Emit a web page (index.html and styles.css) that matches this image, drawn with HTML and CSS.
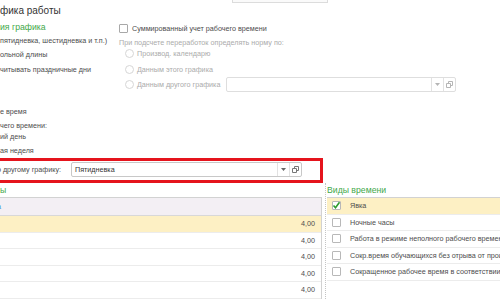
FILE: index.html
```html
<!DOCTYPE html>
<html lang="ru">
<head>
  <meta charset="UTF-8" />
  <meta name="viewport" content="width=device-width, initial-scale=1.0" />
  <title>График работы</title>
  <link rel="stylesheet" href="styles.css">
</head>
<body>
  <div class="top">
    <h1 class="title">фика работы</h1>
    <div class="top-field"></div>
  </div>

  <div class="settings">
    <div class="col-left">
      <div class="group-title">ия графика</div>
      <div class="line l2">пятидневка, шестидневка и т.п.)</div>
      <div class="line l3">ольной длины</div>
      <div class="line l4">читывать праздничные дни</div>
    </div>
    <div class="col-right">
      <div class="check-row"><span class="check"></span>Суммированный учет рабочего времени</div>
      <div class="hint">При подсчете переработок определять норму по:</div>
      <div class="radio-row r1"><span class="radio"></span>Производ. календарю</div>
      <div class="radio-row r2"><span class="radio"></span>Данным этого графика</div>
      <div class="radio-row r3">
        <span class="radio"></span>Данным другого графика
        <div class="field field-off">
          <span class="field-text"></span>
          <span class="field-btn"><svg width="5" height="3" viewBox="0 0 5 3"><path d="M0 0h5L2.5 3z" fill="#b5b5b5"/></svg></span>
          <span class="field-btn"><svg width="7" height="7" viewBox="0 0 7 7"><path d="M0.5 2.5h4v4h-4z M2.5 2.5v-2h4v4h-2" fill="none" stroke="#b5b5b5"/></svg></span>
        </div>
      </div>
    </div>
  </div>

  <div class="hours">
    <div class="line h1">е время</div>
    <div class="line h2">чего времени:</div>
    <div class="line h3">ий день</div>
    <div class="line h4">ая неделя</div>
  </div>

  <div class="other-row">
    <span class="other-label">по другому графику:</span>
    <div class="field field-main">
      <span class="field-text">Пятидневка</span>
      <span class="field-btn"><svg width="5" height="3" viewBox="0 0 5 3"><path d="M0 0h5L2.5 3z" fill="#666"/></svg></span>
      <span class="field-btn"><svg width="7" height="7" viewBox="0 0 7 7"><path d="M0.5 2.5h4v4h-4z M2.5 2.5v-2h4v4h-2" fill="none" stroke="#777"/></svg></span>
    </div>
    <div class="red-frame"></div>
  </div>

  <div class="tables">
    <div class="left-panel">
      <div class="panel-title">ы</div>
      <div class="grid">
        <div class="grid-head"><span class="head-cut">а</span></div>
        <div class="grid-row current">4,00</div>
        <div class="grid-row">4,00</div>
        <div class="grid-row">4,00</div>
        <div class="grid-row">4,00</div>
        <div class="grid-row">4,00</div>
      </div>
    </div>
    <div class="divider"></div>
    <div class="right-panel">
      <div class="panel-title">Виды времени</div>
      <div class="kinds">
        <div class="kind current">
          <span class="box box-on"><svg width="9" height="9" viewBox="0 0 9 9"><path d="M1.5 4.5l2 2.2 4-5.5" fill="none" stroke="#2c9c2c" stroke-width="1.6"/></svg></span>Явка
        </div>
        <div class="kind"><span class="box"></span>Ночные часы</div>
        <div class="kind"><span class="box"></span>Работа в режиме неполного рабочего времени</div>
        <div class="kind"><span class="box"></span>Сокр.время обучающихся без отрыва от производства</div>
        <div class="kind"><span class="box"></span>Сокращенное рабочее время в соответствии с законодательством</div>
      </div>
    </div>
  </div>
</body>
</html>
```

FILE: styles.css
```css
* {
  margin: 0;
  padding: 0;
  box-sizing: border-box;
}
body {
  width: 500px;
  height: 300px;
  overflow: hidden;
  background-color: white;
  font-family: "Liberation Sans", Arial, sans-serif;
  font-size: 7.2px;
  color: #4d4d4d;
  white-space: nowrap;
}
/* title */
.top {
  display: flex;
  height: 20px;
}
.title {
  width: 232px;
  font-size: 10px;
  font-weight: normal;
  color: #333;
  line-height: 22px;
}
.top-field {
  width: 96px;
  height: 3px;
  border: 1px solid #dcdcdc;
  border-top: none;
  background-color: #fafafa;
}
/* settings */
.settings {
  display: flex;
}
.col-left {
  width: 119px;
}
.group-title,
.panel-title {
  color: #43a84a;
  font-size: 8.7px;
  height: 15px;
  line-height: 15px;
}
.line {
  height: 14px;
  line-height: 14px;
}
.l2 {
  height: 12px;
  line-height: 12px;
}
.l3,
.l4 {
  margin-top: 1px;
}
.col-right {
  display: flex;
  flex-direction: column;
}
.check-row {
  display: flex;
  align-items: center;
  height: 16px;
}
.check {
  width: 9px;
  height: 9px;
  border: 1px solid #a8a8a8;
  border-radius: 1px;
  margin-right: 4px;
  background-color: white;
}
.hint {
  margin-top: 2px;
  height: 10px;
  line-height: 10px;
  color: #ababab;
}
.radio-row {
  display: flex;
  align-items: center;
  height: 10px;
  padding-left: 6px;
  color: #ababab;
}
.r2 {
  margin-top: 6px;
}
.r3 {
  margin-top: 3px;
  height: 15px;
}
.radio {
  width: 9px;
  height: 9px;
  border: 1px solid #d6d6d6;
  border-radius: 50%;
  margin-right: 3px;
}
/* input field */
.field {
  display: flex;
  height: 15px;
  border: 1px solid #c8c8c8;
  border-radius: 2px;
  background-color: white;
}
.field-off {
  width: 230px;
  margin-left: 6px;
  border-color: #dedede;
}
.field-text {
  flex: 1;
  padding-left: 3px;
  line-height: 13px;
  color: #333;
}
.field-btn {
  width: 12px;
  display: flex;
  align-items: center;
  justify-content: center;
  border-left: 1px solid #e2e2e2;
}
/* hours */
.hours {
  padding-top: 14px;
}
.hours .line {
  height: 12px;
  line-height: 12px;
}
.h2 {
  margin-top: 2px;
}
.hours .h3 {
  height: 10px;
  line-height: 10px;
}
.h4 {
  margin-top: 3px;
}
/* other schedule row */
.other-row {
  position: relative;
  display: flex;
  align-items: center;
  margin-top: 5px;
  height: 15px;
}
.other-label {
  width: 71px;
  margin-left: -7px;
  flex-shrink: 0;
}
.field-main {
  width: 231px;
  margin-left: 7px;
}
.red-frame {
  position: absolute;
  top: -4px;
  left: -10px;
  width: 333px;
  height: 25px;
  border: 3px solid #e5141d;
}
/* tables */
.tables {
  display: flex;
  margin-top: 6px;
}
.left-panel {
  width: 322px;
  flex-shrink: 0;
}
.panel-title {
  height: 14px;
  line-height: 14px;
}
.grid {
  border-top: 1px solid #d2d2d2;
  border-right: 1px solid #d2d2d2;
}
.grid-head {
  height: 18px;
  line-height: 17px;
  background-color: #f3eff4;
  border-bottom: 1px solid #d8d8d8;
}
.head-cut {
  margin-left: -3px;
  color: #3b8fd9;
}
.grid-row {
  height: 16.5px;
  line-height: 16px;
  text-align: right;
  padding-right: 6px;
  border-bottom: 1px solid #ececec;
}
.current {
  background-color: #fdf0c4;
}
.divider {
  width: 1px;
  margin: 0 1px 0 3px;
  border-left: 1px dotted #c4c4c4;
  flex-shrink: 0;
}
.right-panel {
  width: 260px;
  flex-shrink: 0;
}
.kinds {
  border-top: 1px solid #d2d2d2;
}
.kind {
  display: flex;
  align-items: center;
  height: 16.5px;
  padding-left: 5px;
  border-bottom: 1px solid #ececec;
  overflow: hidden;
}
.box {
  width: 9px;
  height: 9px;
  border: 1px solid #b8b8b8;
  border-radius: 1px;
  background-color: white;
  margin-right: 9px;
  flex-shrink: 0;
  display: flex;
  align-items: center;
  justify-content: center;
}
.box-on svg {
  margin: -1px;
}
```
